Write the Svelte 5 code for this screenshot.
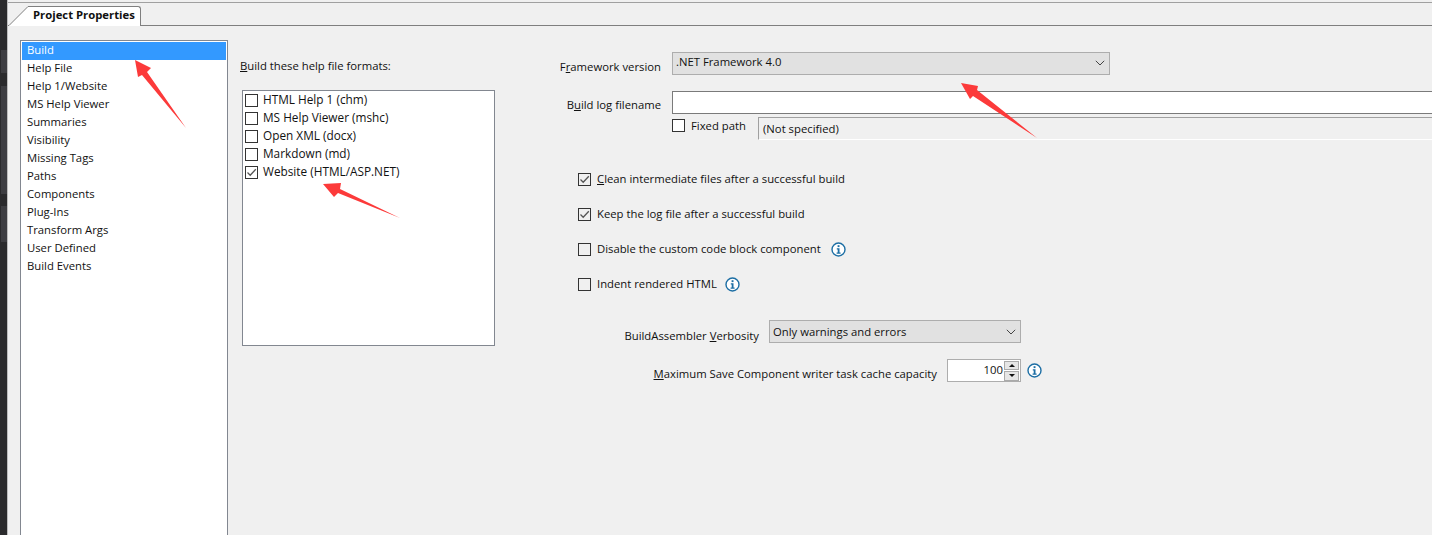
<script>
  const pages = ['Build', 'Help File', 'Help 1/Website', 'MS Help Viewer', 'Summaries', 'Visibility', 'Missing Tags', 'Paths', 'Components', 'Plug-Ins', 'Transform Args', 'User Defined', 'Build Events'];
  const formats = [
    ['HTML Help 1 (chm)', false],
    ['MS Help Viewer (mshc)', false],
    ['Open XML (docx)', false],
    ['Markdown (md)', false],
    ['Website (HTML/ASP.NET)', true],
  ];
  const arrows = [
    '135,60 151,68 147,72 186,128 142,75 138,77',
    '323,184 341,183 340,189 400,218 338,193 334,197',
    '961,83 978,86 977,90 1037,138 973,96 970,99',
  ];
  const patches = [
    [10, 23],
    [13, 108],
    [12, 36],
  ];
</script>

{#snippet check(on)}
  <span class="check">
    {#if on}
      <svg width="11" height="11" viewBox="0 0 11 11"><path d="M1.5 5.5 L4.2 8.2 L9.8 2.2" fill="none" stroke="#555" stroke-width="1.3" /></svg>
    {/if}
  </span>
{/snippet}

{#snippet info()}
  <svg class="info" width="15" height="15" viewBox="0 0 15 15">
    <circle cx="7.5" cy="7.5" r="6.5" fill="#fff" stroke="#1c6ea4" stroke-width="1.4" />
    <rect x="6.6" y="3.2" width="1.9" height="1.9" fill="#1c6ea4" />
    <path d="M5.8 6.3 H8.5 V10.6 H9.6 V11.8 H5.6 V10.6 H6.7 V7.5 H5.8 Z" fill="#1c6ea4" />
  </svg>
{/snippet}

{#snippet chevron()}
  <svg class="chev" width="10" height="6" viewBox="0 0 10 6"><path d="M0.8 0.8 L5 5 L9.2 0.8" fill="none" stroke="#444" stroke-width="1" /></svg>
{/snippet}

<div class="window">
  <div class="side">
    {#each patches as [gap, h]}
      <div class="patch" style="margin-top: {gap}px; height: {h}px"></div>
    {/each}
  </div>
  <div class="main">
    <div class="tabbar">
      <svg class="tab-slant" width="25" height="20" viewBox="0 0 25 20"><path d="M0 20 L20 0.5 H25 V20 Z" fill="#fff" /><path d="M0 19.5 L1 19.5 L20 0.5 H25" fill="none" stroke="#7f7f7f" /></svg>
      <div class="tab">Project Properties</div>
    </div>

    <div class="content">
      <ul class="pages">
        {#each pages as p, i}
          <li class:sel={i === 0}>{p}</li>
        {/each}
      </ul>

      <div class="formats">
        <div class="formats-label"><u>B</u>uild these help file formats:</div>
        <div class="format-list">
          {#each formats as [name, on]}
            <div class="format">{@render check(on)}<span>{name}</span></div>
          {/each}
        </div>
      </div>

      <div class="form">
        <div class="row fw">
          <span class="lbl">F<u>r</u>amework version</span>
          <div class="combo fw-combo"><span>.NET Framework 4.0</span>{@render chevron()}</div>
        </div>
        <div class="row log">
          <span class="lbl">B<u>u</u>ild log filename</span>
          <div class="text-input"></div>
        </div>
        <div class="row fixed">
          {@render check(false)}
          <span class="fixed-lbl">Fixed path</span>
          <div class="fixed-val">(Not specified)</div>
        </div>

        <div class="opts">
          <div class="opt">{@render check(true)}<span><u>C</u>lean intermediate files after a successful build</span></div>
          <div class="opt">{@render check(true)}<span>Keep the log file after a successful build</span></div>
          <div class="opt wide">{@render check(false)}<span>Disable the custom code block component</span>{@render info()}</div>
          <div class="opt">{@render check(false)}<span>Indent rendered HTML</span>{@render info()}</div>
        </div>

        <div class="row verb">
          <span class="lbl">BuildAssembler <u>V</u>erbosity</span>
          <div class="combo verb-combo"><span>Only warnings and errors</span>{@render chevron()}</div>
        </div>
        <div class="row cap">
          <span class="lbl"><u>M</u>aximum Save Component writer task cache capacity</span>
          <div class="spin">
            <span class="spin-val">100</span>
            <div class="spin-btns">
              <div class="spin-btn"><i class="up"></i></div>
              <div class="spin-btn"><i class="down"></i></div>
            </div>
          </div>
          {@render info()}
        </div>
      </div>
    </div>
  </div>

  <svg class="arrows" width="1432" height="535" viewBox="0 0 1432 535">
    {#each arrows as pts}
      <polygon points={pts} fill="#fc3a3a" />
    {/each}
  </svg>
</div>

<style>
  :global(body) { margin: 0; }
  .window {
    position: relative;
    display: flex;
    width: 1432px;
    height: 535px;
    overflow: hidden;
    font-family: "Open Sans", "Noto Sans", sans-serif;
    font-size: 11.3px;
    color: #111;
    background: #f0f0f0;
  }
  .side { width: 8px; flex-shrink: 0; padding: 40px 0 0 1px; box-sizing: border-box; background: #2b2b2d; border-right: 1px solid #bdbdbd; }
  .patch { background: #3e3e42; }
  .main { flex: 1; display: flex; flex-direction: column; min-width: 0; }
  .tabbar {
    display: flex;
    align-items: flex-end;
    background: #f0f0f0;
    border-top: 1px solid #a0a0a0;
    border-bottom: 1px solid #7f7f7f;
    margin-top: 2px;
    box-sizing: border-box;
    height: 24px;
  }
  .tab-slant { flex-shrink: 0; margin-bottom: -1px; }
  .tab {
    height: 20px;
    margin-bottom: -1px;
    padding: 0 7px 0 0;
    width: 108px;
    line-height: 16px;
    font-weight: 700;
    background: #fff;
    border: 1px solid #7f7f7f;
    border-bottom: none;
    border-left: none;
    border-radius: 0 3px 0 0;
    box-sizing: border-box;
    white-space: nowrap;
  }
  .content { flex: 1; display: flex; background: #f0f0f0; padding: 14px 0 0 12px; min-height: 0; }
  .pages {
    list-style: none;
    margin: 0;
    padding: 1px;
    width: 208px;
    height: 520px;
    box-sizing: border-box;
    background: #fff;
    border: 1px solid #828790;
    flex-shrink: 0;
  }
  .pages li { height: 18px; line-height: 15px; padding-left: 5px; }
  .pages li.sel { background: #3399ff; color: #fff; }
  .formats { margin-left: 12px; width: 255px; flex-shrink: 0; }
  .formats-label { margin-top: 17px; line-height: 18px; }
  .format-list {
    margin: 15px 0 0 2px;
    width: 253px;
    height: 256px;
    box-sizing: border-box;
    border: 1px solid #828790;
    background: #fff;
    padding: 0 0 0 2px;
    font-size: 11.8px;
  }
  .format { display: flex; align-items: center; gap: 5px; height: 18px; }
  .format span:last-child { margin-top: -2px; }
  .check {
    width: 13px;
    height: 13px;
    box-sizing: border-box;
    border: 1px solid #333;
    background: #fff;
    display: inline-flex;
    align-items: center;
    justify-content: center;
    flex-shrink: 0;
  }
  .opt .check { background: transparent; }
  .form { flex: 1; min-width: 0; }
  .row { display: flex; align-items: center; }
  .lbl { display: inline-block; text-align: right; flex-shrink: 0; white-space: nowrap; }
  .fw { margin-top: 11px; height: 24px; }
  .fw .lbl { margin-top: 6px; }
  .fw .lbl, .log .lbl { width: 166px; margin-right: 11px; }
  .combo {
    height: 23px;
    display: flex;
    align-items: center;
    justify-content: space-between;
    background: #e1e1e1;
    border: 1px solid #adadad;
    box-sizing: border-box;
    padding: 0 4px 0 3px;
  }
  .fw-combo { width: 438px; }
  .fw-combo span { margin-top: -4px; }
  .log { margin-top: 16px; height: 23px; }
  .log .lbl { margin-top: 4px; }
  .text-input { flex: 1; height: 23px; box-sizing: border-box; background: #fff; border: 1px solid #7a7a7a; border-right: none; }
  .fixed { height: 27px; padding-left: 177px; align-items: flex-start; }
  .fixed .check { margin-top: 5px; }
  .fixed-lbl { margin: 4px 0 0 6px; width: 67px; flex-shrink: 0; }
  .fixed-val {
    flex: 1;
    height: 23px;
    margin-top: 3px;
    padding: 3px 0 0 4px;
    box-sizing: border-box;
    border-top: 1px solid #a0a0a0;
    border-left: 1px solid #a0a0a0;
    border-bottom: 1px solid #fff;
  }
  .opts { margin: 29px 0 0 83px; display: flex; flex-direction: column; gap: 17px; }
  .opt { display: flex; align-items: center; height: 18px; }
  .opt span:not(.check) { margin-top: -2px; }
  .opt .check { margin-right: 6px; }
  .opt .info { margin-left: 8px; }
  .opt.wide .info { margin-left: 10px; }
  .verb { margin-top: 27px; height: 23px; }
  .verb .lbl { width: 264px; margin: 8px 10px 0 0; }
  .verb-combo { width: 252px; }
  .cap { margin-top: 16px; height: 23px; }
  .cap .lbl { width: 442px; margin: 5px 10px 0 0; }
  .cap .info { margin-left: 6px; }
  .spin {
    width: 74px;
    height: 23px;
    box-sizing: border-box;
    background: #fff;
    border: 1px solid #adadad;
    display: flex;
    align-items: center;
    justify-content: flex-end;
  }
  .spin-val { padding-right: 1px; margin-top: -3px; }
  .spin-btns { width: 15px; height: 20px; margin-right: 1px; display: flex; flex-direction: column; gap: 1px; }
  .spin-btn { flex: 1; background: #e6e6e6; border: 1px solid #aaa; box-sizing: border-box; display: flex; align-items: center; justify-content: center; }
  .spin-btn i { width: 0; height: 0; border-left: 3px solid transparent; border-right: 3px solid transparent; }
  .spin-btn .up { border-bottom: 3px solid #111; }
  .spin-btn .down { border-top: 3px solid #111; }
  .arrows { position: absolute; left: 0; top: 0; pointer-events: none; }
</style>
